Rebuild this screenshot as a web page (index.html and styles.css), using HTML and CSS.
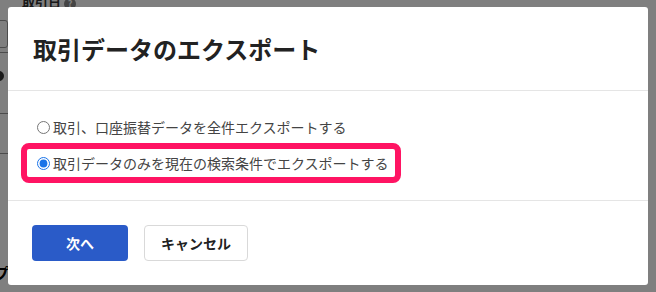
FILE: index.html
```html
<!DOCTYPE html>
<html lang="ja">
<head>
	<meta charset="UTF-8">
	<meta name="viewport" content="width=device-width, initial-scale=1.0">
	<title>取引データのエクスポート</title>
	<link rel="stylesheet" href="styles.css">
</head>
<body>
<!-- 背面のページ -->
<div class="page">
	<div class="page-label">取引日 <span class="help">?</span></div>
	<div class="page-input"></div>
	<div class="page-icon"></div>
	<div class="page-row r1"></div>
	<div class="page-row r2"></div>
	<div class="page-row r3"></div>
	<div class="page-foot">プ</div>
</div>

<div class="overlay"></div>

<!-- エクスポートダイアログ -->
<div class="modal">
	<div class="modal-header">
		<h2 class="modal-title">取引データのエクスポート</h2>
	</div>
	<div class="modal-body">
		<label class="radio-row">
			<input type="radio" name="export" class="radio">
			<span>取引、口座振替データを全件エクスポートする</span>
		</label>
		<label class="radio-row">
			<input type="radio" name="export" class="radio" checked>
			<span>取引データのみを現在の検索条件でエクスポートする</span>
		</label>
	</div>
	<div class="modal-footer">
		<button class="btn btn-primary">次へ</button>
		<button class="btn btn-default">キャンセル</button>
	</div>
	<div class="highlight"></div>
</div>
</body>
</html>
```

FILE: styles.css
```css
body {
	margin: 0;
	font-family: "Noto Sans CJK JP", "Noto Sans", sans-serif;
	background-color: #fff;
	color: #333;
	width: 656px;
	height: 292px;
	overflow: hidden;
}
.page {
	position: relative;
	height: 292px;
}
.page-label {
	position: absolute;
	left: 22px;
	top: -8px;
	font-size: 13px;
	font-weight: bold;
}
.help {
	display: inline-block;
	width: 12px;
	height: 12px;
	border-radius: 50%;
	background-color: #888;
	color: #fff;
	font-size: 9px;
	text-align: center;
	line-height: 12px;
}
.page-input {
	position: absolute;
	left: -10px;
	top: 20px;
	width: 16px;
	height: 26px;
	border: 1px solid #999;
	border-radius: 3px;
}
.page-icon {
	position: absolute;
	left: -6px;
	top: 71px;
	width: 10px;
	height: 10px;
	border-radius: 50%;
	background-color: #333;
}
.page-row {
	position: absolute;
	left: 0;
	width: 8px;
	border-top: 1px solid #999;
}
.r1 { top: 52px; }
.r2 { top: 113px; }
.r3 { top: 153px; }
.page-foot {
	position: absolute;
	left: -6px;
	top: 262px;
	font-size: 15px;
	font-weight: bold;
	color: #000;
}
.overlay {
	position: fixed;
	inset: 0;
	background-color: rgba(0, 0, 0, 0.5);
}
.modal {
	position: fixed;
	left: 8px;
	top: 7px;
	width: 640px;
	height: 278px;
	background-color: #fff;
	border-radius: 3px;
	display: flex;
	flex-direction: column;
}
.modal-header {
	height: 83px;
	padding: 0 25px;
	display: flex;
	align-items: center;
	border-bottom: 1px solid #e5e5e5;
}
.modal-title {
	margin: 0;
	font-size: 24px;
	font-weight: bold;
	color: #222;
	line-height: 1;
}
.modal-body {
	padding: 18px 28px 19px;
	border-bottom: 1px solid #e5e5e5;
}
.radio-row {
	display: flex;
	align-items: center;
	height: 36px;
	font-size: 14px;
	color: #444;
}
.radio {
	width: 13px;
	height: 13px;
	margin: 0 3px 0 1px;
	accent-color: #1a73e8;
}
.modal-footer {
	padding: 24px 24px;
	display: flex;
	gap: 16px;
}
button {
	height: 36px;
	padding: 0;
	font-family: inherit;
	font-size: 14px;
	font-weight: bold;
	border-radius: 4px;
	cursor: pointer;
}
.btn-primary {
	width: 96px;
	background-color: #2a5bc8;
	color: #fff;
	border: none;
}
.btn-default {
	width: 104px;
	background-color: #fff;
	color: #222;
	border: 1px solid #d9d9d9;
}
.highlight {
	position: absolute;
	left: 13px;
	top: 136px;
	width: 368px;
	height: 28px;
	border: 6px solid #ff1463;
	border-radius: 8px;
}
```
